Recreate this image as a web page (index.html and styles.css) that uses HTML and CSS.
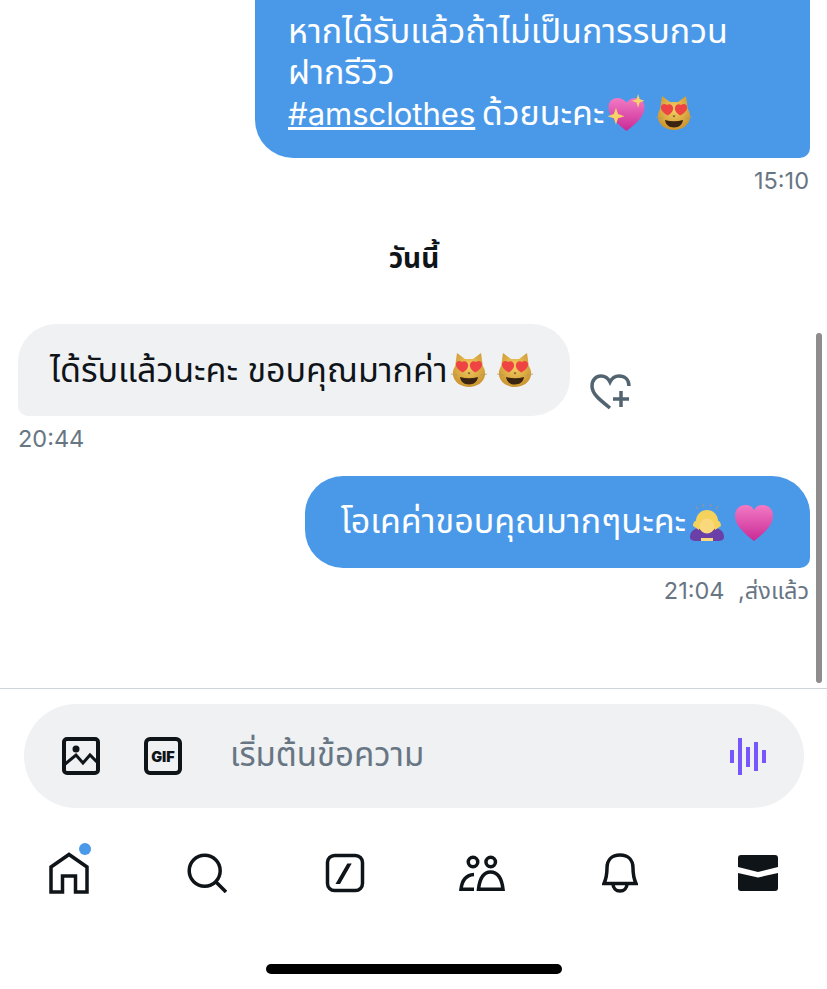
FILE: index.html
```html
<!DOCTYPE html>
<html lang="th">
<head>
  <meta charset="UTF-8" />
  <title>ข้อความ</title>
  <meta name="viewport" content="width=device-width, initial-scale=1.0" />
  <link rel="stylesheet" href="styles.css">
</head>
<body>
  <svg class="defs" width="0" height="0">
    <defs>
      <radialGradient id="catFace" cx="50%" cy="40%" r="65%">
        <stop offset="0" stop-color="#f5cf62" />
        <stop offset="1" stop-color="#c8902c" />
      </radialGradient>
      <linearGradient id="pinkHeart" x1="0" y1="0" x2="0" y2="1">
        <stop offset="0" stop-color="#f27ac4" />
        <stop offset="1" stop-color="#c92a95" />
      </linearGradient>
      <symbol id="cat" viewBox="0 0 36 36">
        <path d="M6 1l8 6h8l8-6 1.800 13c2 3 2.600 6 2.200 9-.8 7-8 12-16 12S2.800 30 2 23c-.4-3 .2-6 2.200-9z" fill="url(#catFace)" />
        <path d="M11 10c-3-2.200-6.400-.4-6 3 .3 3.200 3.600 5.800 6.800 7.400 3-1.700 5.500-4.200 5.300-7.500-.2-3-3.600-4.800-6.100-2.900z" fill="#ee4444" />
        <path d="M25 10c-2.500-1.900-5.900-.1-6.100 2.900-.2 3.300 2.300 5.800 5.300 7.500 3.200-1.600 6.500-4.200 6.800-7.400.4-3.400-3-5.200-6-3z" fill="#ee4444" />
        <path d="M16.500 20.500h3l-1.500 2z" fill="#6b4a2a" />
        <path d="M9 25c5.800 1.700 12.200 1.700 18 0-.6 4.800-4.300 7.500-9 7.500S9.600 29.800 9 25z" fill="#3a2412" />
        <path d="M0 22l7 1.500M36 22l-7 1.500" stroke="#b89a5c" stroke-width=".8" />
      </symbol>
    </defs>
  </svg>

  <main class="chat">
    <div class="bubble sent first">
      หากได้รับแล้วถ้าไม่เป็นการรบกวน<br>
      ฝากรีวิว<br>
      <a class="tag" href="#">#amsclothes</a> ด้วยนะคะ<svg class="emoji sparkle" viewBox="0 0 36 36"><path d="M18 35C8 28 0 20 1 11 2 3 12 1 18 8c6-7 16-5 17 3 1 9-7 17-17 24z" fill="url(#pinkHeart)" /><path d="M8 13l2 6 6 2-6 2-2 6-2-6-6-2 6-2z" fill="#f7d468" /><path d="M29 0l1.500 5 4.500 1.500-4.500 1.500L29 13l-1.500-5L23 6.500 27.500 5z" fill="#f7d468" /></svg><svg class="emoji spaced"><use href="#cat" /></svg>
    </div>
    <div class="meta right">15:10</div>

    <h2 class="day">วันนี้</h2>

    <div class="received-row">
      <div class="bubble received">ได้รับแล้วนะคะ ขอบคุณมากค่า<svg class="emoji"><use href="#cat" /></svg><svg class="emoji spaced"><use href="#cat" /></svg></div>
      <svg class="react" viewBox="0 0 42 36" fill="none" stroke="#536471" stroke-width="3.500">
        <path d="M20 34C10 26 2 20 2 12 2 6 6 2 11 2c4 0 7 2 9 6 2-4 5-6 9-6 6 0 10 4 10 10" />
        <path d="M31 17v16M23 25h16" />
      </svg>
    </div>
    <div class="meta left">20:44</div>

    <div class="bubble sent second">โอเคค่าขอบคุณมากๆนะคะ<svg class="emoji bow" viewBox="0 0 36 39"><path d="M1 34c0-7 6-10 17-10s17 3 17 10c0 3-3 4-6 4H7c-3 0-6-1-6-4z" fill="#6a3fa8" /><circle cx="18" cy="18" r="11" fill="#f5d25c" /><circle cx="18" cy="23" r="7.500" fill="#f9d97c" /><path d="M4 23c0-5 4-7 7-5l-1 9zM32 23c0-5-4-7-7-5l1 9z" fill="#f5d25c" /><path d="M12 35h12v3H12z" fill="#f9d97c" /><path d="M7 3l1.500 3M14 1l.5 3M22 1l-.5 3M29 3l-1.500 3" stroke="#8a95a0" stroke-width="1.500" /></svg><svg class="emoji spaced plain-heart" viewBox="0 0 36 35"><path d="M18 35C8 27 0 20 0 11 0 4 5 1 10 1c4 0 7 2 8 5 1-3 4-5 8-5 5 0 10 3 10 10 0 9-8 16-18 24z" fill="url(#pinkHeart)" /></svg></div>
    <div class="meta right spread">21:04 ,ส่งแล้ว</div>
  </main>
  <div class="scrollbar"></div>

  <div class="composer">
    <div class="input-bar">
      <svg class="tool" viewBox="0 0 38 38" fill="none" stroke="#0f1419" stroke-width="4">
        <rect x="2" y="2" width="34" height="34" rx="3" />
        <circle cx="14" cy="12" r="3.500" fill="#0f1419" stroke="none" />
        <path d="M2 28l12-10 7 8 7-8 8 8" stroke-width="3" />
      </svg>
      <svg class="tool gif" viewBox="0 0 38 38" fill="none" stroke="#0f1419" stroke-width="4">
        <rect x="2" y="2" width="34" height="34" rx="4" />
        <text x="19" y="24.500" text-anchor="middle" class="gif-text">GIF</text>
      </svg>
      <span class="placeholder">เริ่มต้นข้อความ</span>
      <svg class="voice" viewBox="0 0 36 37" fill="#7856ff">
        <rect x="0" y="12" width="4" height="13" />
        <rect x="8" y="0" width="4" height="37" />
        <rect x="16" y="9" width="4" height="20" />
        <rect x="24" y="4" width="4" height="29" />
        <rect x="32" y="12" width="4" height="13" />
      </svg>
    </div>
    <nav class="tabs">
      <div class="tab has-dot">
        <svg width="40" height="42" viewBox="0 0 40 42" fill="none" stroke="#0f1419" stroke-width="3.500">
          <path d="M2 40V15L20 2.500 38 15v25H26.500V24h-13v16z" />
        </svg>
      </div>
      <div class="tab">
        <svg width="40" height="40" viewBox="0 0 40 40" fill="none" stroke="#0f1419" stroke-width="3.500">
          <circle cx="17.700" cy="17.700" r="15.500" />
          <path d="M28 28l11 11" />
        </svg>
      </div>
      <div class="tab">
        <svg width="40" height="40" viewBox="0 0 40 40" fill="none" stroke="#0f1419" stroke-width="3.500">
          <rect x="2.500" y="2.500" width="35" height="35" rx="7" />
          <path d="M22.300 10.500h4.400L15 31h-4.500z" fill="#0f1419" stroke="none" />
        </svg>
      </div>
      <div class="tab">
        <svg width="46" height="36" viewBox="0 0 46 36" fill="none" stroke="#0f1419" stroke-width="3.500">
          <circle cx="14" cy="7" r="4.750" />
          <circle cx="31.700" cy="7" r="4.750" />
          <path d="M15 19.500C7 20 3 25 2 34.300h13" />
          <path d="M19.500 34.300H44c-1-9-4-17.300-12.500-17.300S20.500 25.300 19.500 34.300z" />
        </svg>
      </div>
      <div class="tab">
        <svg width="36" height="40" viewBox="0 0 36 40" fill="none" stroke="#0f1419" stroke-width="3.500">
          <path d="M2 30.500C4 26 5 21 5 15 5 7 10 2 18 2s13 5 13 13c0 6 1 11 3 15.500z" />
          <path d="M11 31c0 4 3 7 7 7s7-3 7-7" />
        </svg>
      </div>
      <div class="tab">
        <svg width="40" height="36" viewBox="0 0 40 36" fill="#0f1419">
          <path d="M3 0h34c2 0 3 1 3 3v9L20 17 0 12V3c0-2 1-3 3-3z" />
          <path d="M0 18l20 4.500L40 18v15c0 2-1 3-3 3H3c-2 0-3-1-3-3z" />
        </svg>
      </div>
    </nav>
    <div class="home-indicator"></div>
  </div>
</body>
</html>
```

FILE: styles.css
```css
:root {
  --blue: #4a99e9;
  --grey-bg: #eff1f3;
  --text: #0f1419;
  --muted: #687684;
  --border: #d0d5d9;
}
* {
  box-sizing: border-box;
}
html, body {
  margin: 0;
  height: 100%;
  overflow: hidden;
}
body {
  position: relative;
  background: #fff;
  color: var(--text);
  font-family: Inter, "Noto Sans", "Noto Sans Thai", "Liberation Sans", sans-serif;
  font-size: 34px;
}
.defs {
  display: block;
}
.chat {
  height: 689px;
  padding: 0 17px 83px 18px;
  display: flex;
  flex-direction: column;
  justify-content: flex-end;
  overflow: hidden;
  border-bottom: 1px solid var(--border);
}
.bubble {
  flex: none;
  line-height: 41px;
  border-radius: 38px;
  white-space: nowrap;
}
.sent {
  align-self: flex-end;
  background: var(--blue);
  color: #fff;
  border-bottom-right-radius: 10px;
}
.first {
  padding: 90px 0 24px 33px;
  width: 555px;
}
.second {
  margin-top: 23px;
  height: 92px;
  padding: 24px 37px 0 36px;
}
.received {
  background: var(--grey-bg);
  padding: 25px 37px 26px 32px;
  border-bottom-left-radius: 10px;
}
.tag {
  color: #fff;
  font-size: 31px;
  margin-right: -3px;
}
.emoji {
  width: 36px;
  height: 36px;
  margin-left: 3px;
  vertical-align: -6px;
}
.sparkle {
  width: 39px;
  height: 38px;
  margin-left: 3px;
  vertical-align: -7px;
}
.bow {
  height: 39px;
  vertical-align: -9px;
}
.plain-heart {
  width: 38px;
  height: 37px;
  vertical-align: -8px;
}
.emoji.spaced {
  margin-left: 10px;
}
.meta {
  flex: none;
  margin-top: 8px;
  font-size: 23.5px;
  line-height: 29px;
  color: var(--muted);
}
.meta.right {
  align-self: flex-end;
  margin-right: 1px;
}
.spread {
  word-spacing: 7px;
}
.day {
  flex: none;
  margin: 47px 0 50px;
  text-align: center;
  font-size: 28px;
  line-height: 32px;
  font-weight: 700;
}
.received-row {
  flex: none;
  display: flex;
  align-items: flex-end;
  gap: 20px;
}
.react {
  width: 42px;
  height: 36px;
  margin-bottom: 6px;
}
.scrollbar {
  position: absolute;
  left: 816px;
  top: 333px;
  width: 6px;
  height: 350px;
  border-radius: 3px;
  background: #8d8d8d;
}
.input-bar {
  margin: 15px 23px 0 24px;
  height: 104px;
  border-radius: 52px;
  background: var(--grey-bg);
  display: flex;
  align-items: center;
  padding: 0 38px;
}
.tool {
  width: 38px;
  height: 38px;
  flex: none;
}
.gif {
  margin-left: 44px;
}
.gif-text {
  font-family: Inter, sans-serif;
  font-size: 14.5px;
  font-weight: 900;
  fill: #0f1419;
  stroke: none;
}
.placeholder {
  margin-left: 48px;
  flex: 1;
  font-size: 33px;
  color: var(--muted);
}
.voice {
  width: 36px;
  height: 37px;
  flex: none;
}
.tabs {
  margin-top: 43px;
  height: 44px;
  display: grid;
  grid-template-columns: repeat(6, 1fr);
}
.tab {
  position: relative;
  display: flex;
  align-items: center;
  justify-content: center;
}
.has-dot::after {
  content: "";
  position: absolute;
  left: 79px;
  top: -8px;
  width: 12px;
  height: 12px;
  border-radius: 50%;
  background: var(--blue);
}
.home-indicator {
  width: 296px;
  height: 10px;
  margin: 69px auto 0;
  border-radius: 5px;
  background: #000;
}
```
